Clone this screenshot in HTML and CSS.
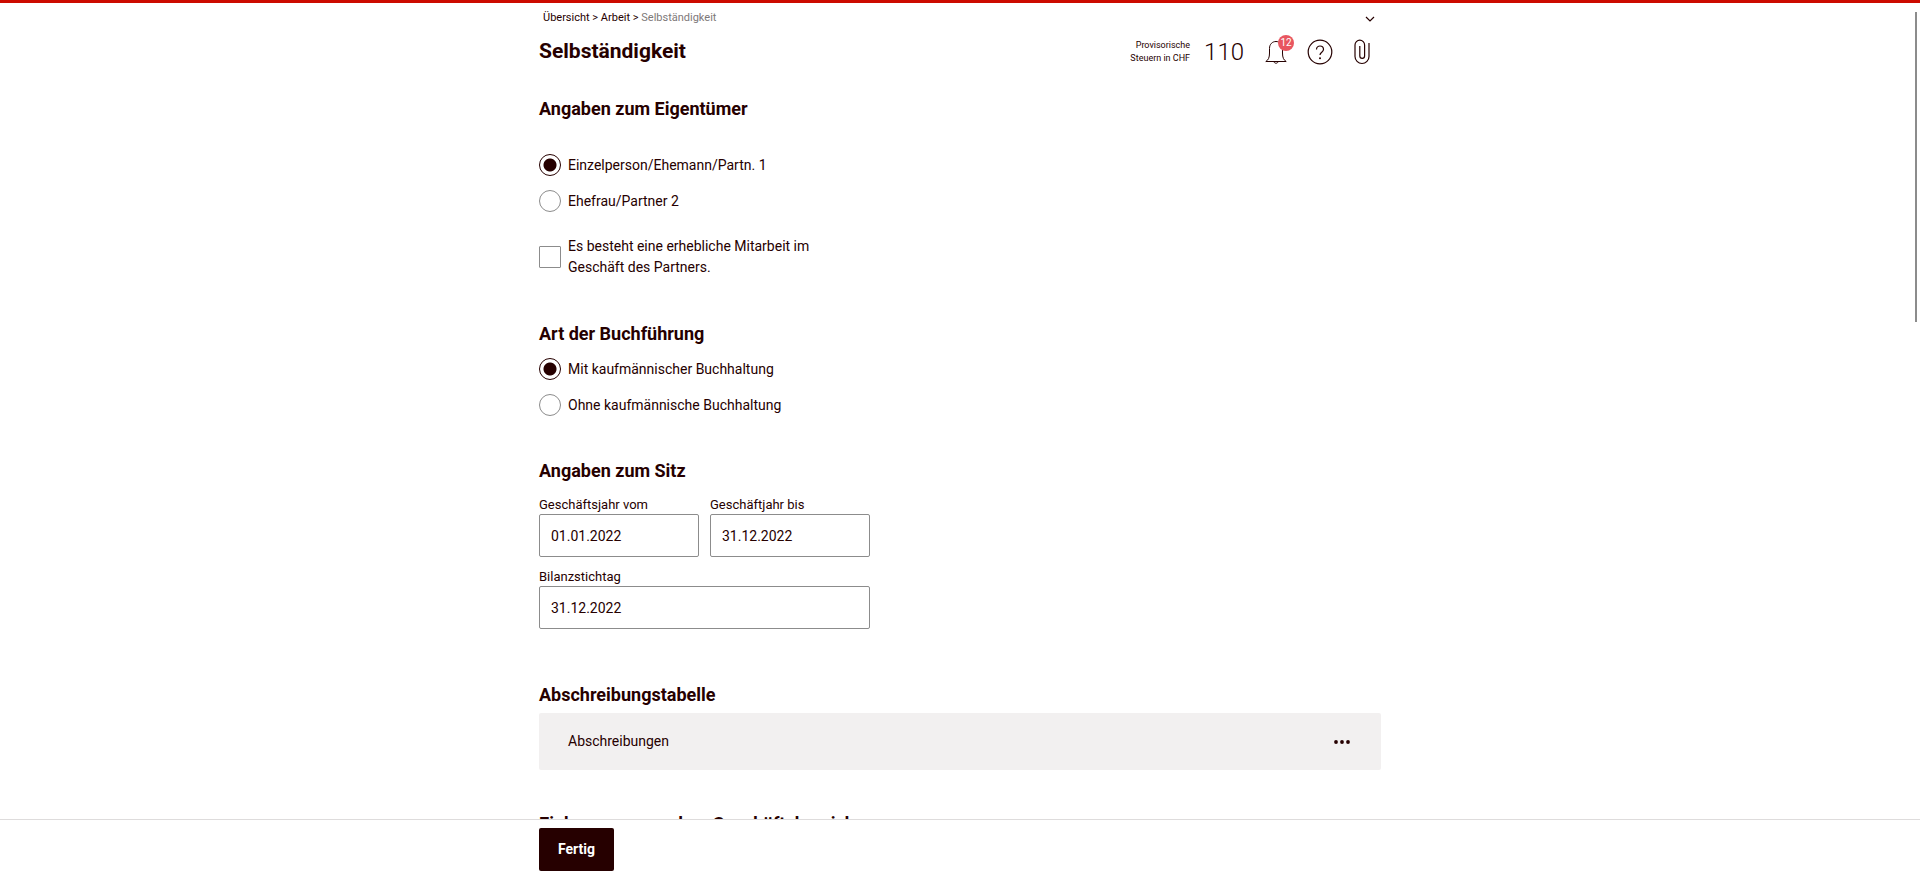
FILE: index.html
```html
<!DOCTYPE html>
<html lang="de">
<head>
  <meta charset="UTF-8">
  <title>Selbständigkeit</title>
  <meta name="viewport" content="width=device-width, initial-scale=1.0">
  <link rel="stylesheet" href="styles.css">
</head>
<body>
  <div class="scroll-area">
    <div class="container">
      <header>
        <div class="topline">
          <nav class="breadcrumb">
            <a href="#">Übersicht</a> &gt; <a href="#">Arbeit</a> &gt; <span class="current">Selbständigkeit</span>
          </nav>
          <button type="button" class="icon-btn toggle" aria-label="Menü aufklappen">
            <svg width="10" height="6" viewBox="0 0 10 6"><path d="M1 1l4 4 4-4" /></svg>
          </button>
        </div>
        <div class="title-row">
          <h1>Selbständigkeit</h1>
          <div class="tools">
            <div class="tax-label">Provisorische<br>Steuern in CHF</div>
            <div class="tax-value">110</div>
            <button type="button" class="icon-btn bell" aria-label="Meldungen">
              <svg width="22" height="24" viewBox="0 0 22 24">
                <path d="M.8 21.500h20.400c-2.600-1.500-3.700-4-3.700-8.500V8.500C17.500 4 14.500 1.500 11 1.500S4.500 4 4.500 8.500V13c0 4.500-1.100 7-3.700 8.500z" />
                <path d="M9 21.500c0 2.300 4 2.300 4 0" />
              </svg>
              <span class="badge">12</span>
            </button>
            <button type="button" class="icon-btn help" aria-label="Hilfe">
              <svg width="26" height="26" viewBox="0 0 26 26">
                <circle cx="13" cy="13" r="11.800" />
                <path d="M9.500 10.500c0-4.700 7-4.700 7 0 0 2.700-3.500 2.700-3.500 5.500" />
                <circle class="dot" cx="13" cy="19.300" r="1" />
              </svg>
            </button>
            <button type="button" class="icon-btn clip" aria-label="Beilagen">
              <svg width="18" height="26" viewBox="0 0 18 26">
                <path d="M16 4v13.500a7 7 0 0 1-14 0V6a4.800 4.800 0 0 1 9.600 0v11a2.400 2.400 0 0 1-4.800 0V7" />
              </svg>
            </button>
          </div>
        </div>
      </header>

      <main>
        <section class="owner">
          <h2>Angaben zum Eigentümer</h2>
          <div class="options">
            <label class="option"><input type="radio" name="owner" checked><span>Einzelperson/Ehemann/Partn. 1</span></label>
            <label class="option"><input type="radio" name="owner"><span>Ehefrau/Partner 2</span></label>
          </div>
          <label class="option partner-work"><input type="checkbox"><span>Es besteht eine erhebliche Mitarbeit im Geschäft des Partners.</span></label>
        </section>

        <section class="accounting">
          <h2>Art der Buchführung</h2>
          <div class="options">
            <label class="option"><input type="radio" name="accounting" checked><span>Mit kaufmännischer Buchhaltung</span></label>
            <label class="option"><input type="radio" name="accounting"><span>Ohne kaufmännische Buchhaltung</span></label>
          </div>
        </section>

        <section class="seat">
          <h2>Angaben zum Sitz</h2>
          <div class="fields">
            <div class="field">
              <label for="year-from">Geschäftsjahr vom</label>
              <input type="text" id="year-from" value="01.01.2022">
            </div>
            <div class="field">
              <label for="year-to">Geschäftjahr bis</label>
              <input type="text" id="year-to" value="31.12.2022">
            </div>
            <div class="field wide">
              <label for="balance-date">Bilanzstichtag</label>
              <input type="text" id="balance-date" value="31.12.2022">
            </div>
          </div>
        </section>

        <section class="depreciation">
          <h2>Abschreibungstabelle</h2>
          <div class="row">
            <span>Abschreibungen</span>
            <button type="button" class="icon-btn more" aria-label="Mehr">
              <svg width="16" height="4" viewBox="0 0 16 4"><circle cx="2" cy="2" r="1.900" /><circle cx="8" cy="2" r="1.900" /><circle cx="14" cy="2" r="1.900" /></svg>
            </button>
          </div>
        </section>

        <section>
          <h2>Einkommen aus dem Geschäftsbereich</h2>
        </section>
      </main>
    </div>
  </div>

  <footer>
    <div class="container">
      <button type="button" class="done">Fertig</button>
    </div>
  </footer>
  <div class="scroll-thumb"></div>
</body>
</html>
```
FILE: styles.css
```css
* {
  box-sizing: border-box;
}

body {
  margin: 0;
  height: 100vh;
  display: flex;
  flex-direction: column;
  border-top: 3px solid #cc0a00;
  background: #fff;
  color: #260000;
  font-family: Roboto, sans-serif;
  font-size: 14px;
  line-height: 21px;
  overflow: hidden;
}

.scroll-area {
  flex: 1;
  min-height: 0;
  overflow-y: auto;
  scrollbar-width: none; /* own thumb, see .scroll-thumb */
}

.container {
  max-width: 842px;
  margin: 0 auto;
}

h1, h2 {
  margin: 0;
  font-weight: 700;
}

h1 {
  font-size: 21px;
  line-height: 32px;
}

h2 {
  font-size: 18px;
  line-height: 24px;
}

button, input {
  font: inherit;
  color: inherit;
}

/* Header */
.topline {
  display: flex;
  justify-content: space-between;
  align-items: center;
  height: 28px;
  padding: 0 6px 0 4px;
}

.breadcrumb {
  font-size: 11px;
}

.breadcrumb a {
  color: inherit;
  text-decoration: none;
}

.breadcrumb .current {
  color: #7d7878;
}

.icon-btn {
  display: flex;
  padding: 0;
  border: none;
  background: none;
  cursor: pointer;
}

.icon-btn svg {
  fill: none;
  stroke: #260000;
  stroke-width: 1.2;
}

.toggle {
  padding-top: 4px;
}

.title-row {
  display: flex;
  justify-content: space-between;
  align-items: center;
  height: 40px;
}

.tools {
  display: flex;
  align-items: center;
  padding: 1px 10px 0 0;
}

.tax-label {
  font-size: 9px;
  line-height: 13px;
  text-align: right;
}

.tax-value {
  margin: 0 21px 0 14px;
  font-size: 24px;
  line-height: 32px;
  font-weight: 300;
}

.bell {
  position: relative;
  margin-right: 20px;
}

.bell svg {
  stroke-width: 1;
}

.badge {
  position: absolute;
  top: -5px;
  right: -7px;
  width: 16px;
  height: 16px;
  border-radius: 50%;
  background: #e85660;
  color: #fff;
  font-size: 10px;
  line-height: 16px;
  text-align: center;
}

.help {
  margin-right: 20px;
}

.icon-btn .dot {
  fill: #260000;
  stroke: none;
}

/* Radios and checkboxes */
.options {
  display: flex;
  flex-direction: column;
  gap: 14px;
}

.option {
  display: flex;
  align-items: center;
  gap: 7px;
  max-width: 300px;
}

.option input {
  appearance: none;
  flex: none;
  width: 22px;
  height: 22px;
  margin: 0;
  border: 1px solid #8c8c8c;
  background: #fff;
}

.option input[type="radio"] {
  border-radius: 50%;
}

.option input[type="checkbox"] {
  border-radius: 1px;
}

.option input:checked {
  border-color: #260000;
  background: radial-gradient(circle, #260000 6px, #fff 7px);
}

.owner {
  padding-top: 26px;
}

.owner .options {
  margin-top: 33px;
}

.partner-work {
  margin-top: 24px;
}

.accounting {
  padding-top: 44px;
}

.accounting .options {
  margin-top: 12px;
}

/* Text fields */
.seat {
  padding-top: 43px;
}

.fields {
  display: grid;
  grid-template-columns: 1fr 1fr;
  gap: 11px;
  max-width: 331px;
  margin-top: 13px;
}

.wide {
  grid-column: span 2;
}

.field label {
  display: block;
  font-size: 13px;
  line-height: 18px;
}

.field input {
  display: block;
  width: 100%;
  height: 43px;
  padding: 0 11px;
  border: 1px solid #8c8c8c;
  border-radius: 2px;
  background: #fff;
}

.depreciation {
  padding-top: 54px;
}

.row {
  display: flex;
  justify-content: space-between;
  align-items: center;
  height: 57px;
  margin: 6px 0 42px;
  padding: 0 31px 0 29px;
  border-radius: 2px;
  background: #f2f0f0;
}

.more svg {
  fill: #260000;
  stroke: none;
}

/* Bottom bar */
footer {
  border-top: 1px solid #dedcdc;
  padding: 8px 0 4px;
  background: #fff;
}

.done {
  display: block;
  height: 43px;
  padding: 0 19px;
  border: none;
  border-radius: 2px;
  background: #260000;
  color: #fff;
  font-weight: 700;
  cursor: pointer;
}

.scroll-thumb {
  position: fixed;
  top: 12px;
  right: 3px;
  width: 2px;
  height: 310px;
  background: #8c8c8c;
}
```
